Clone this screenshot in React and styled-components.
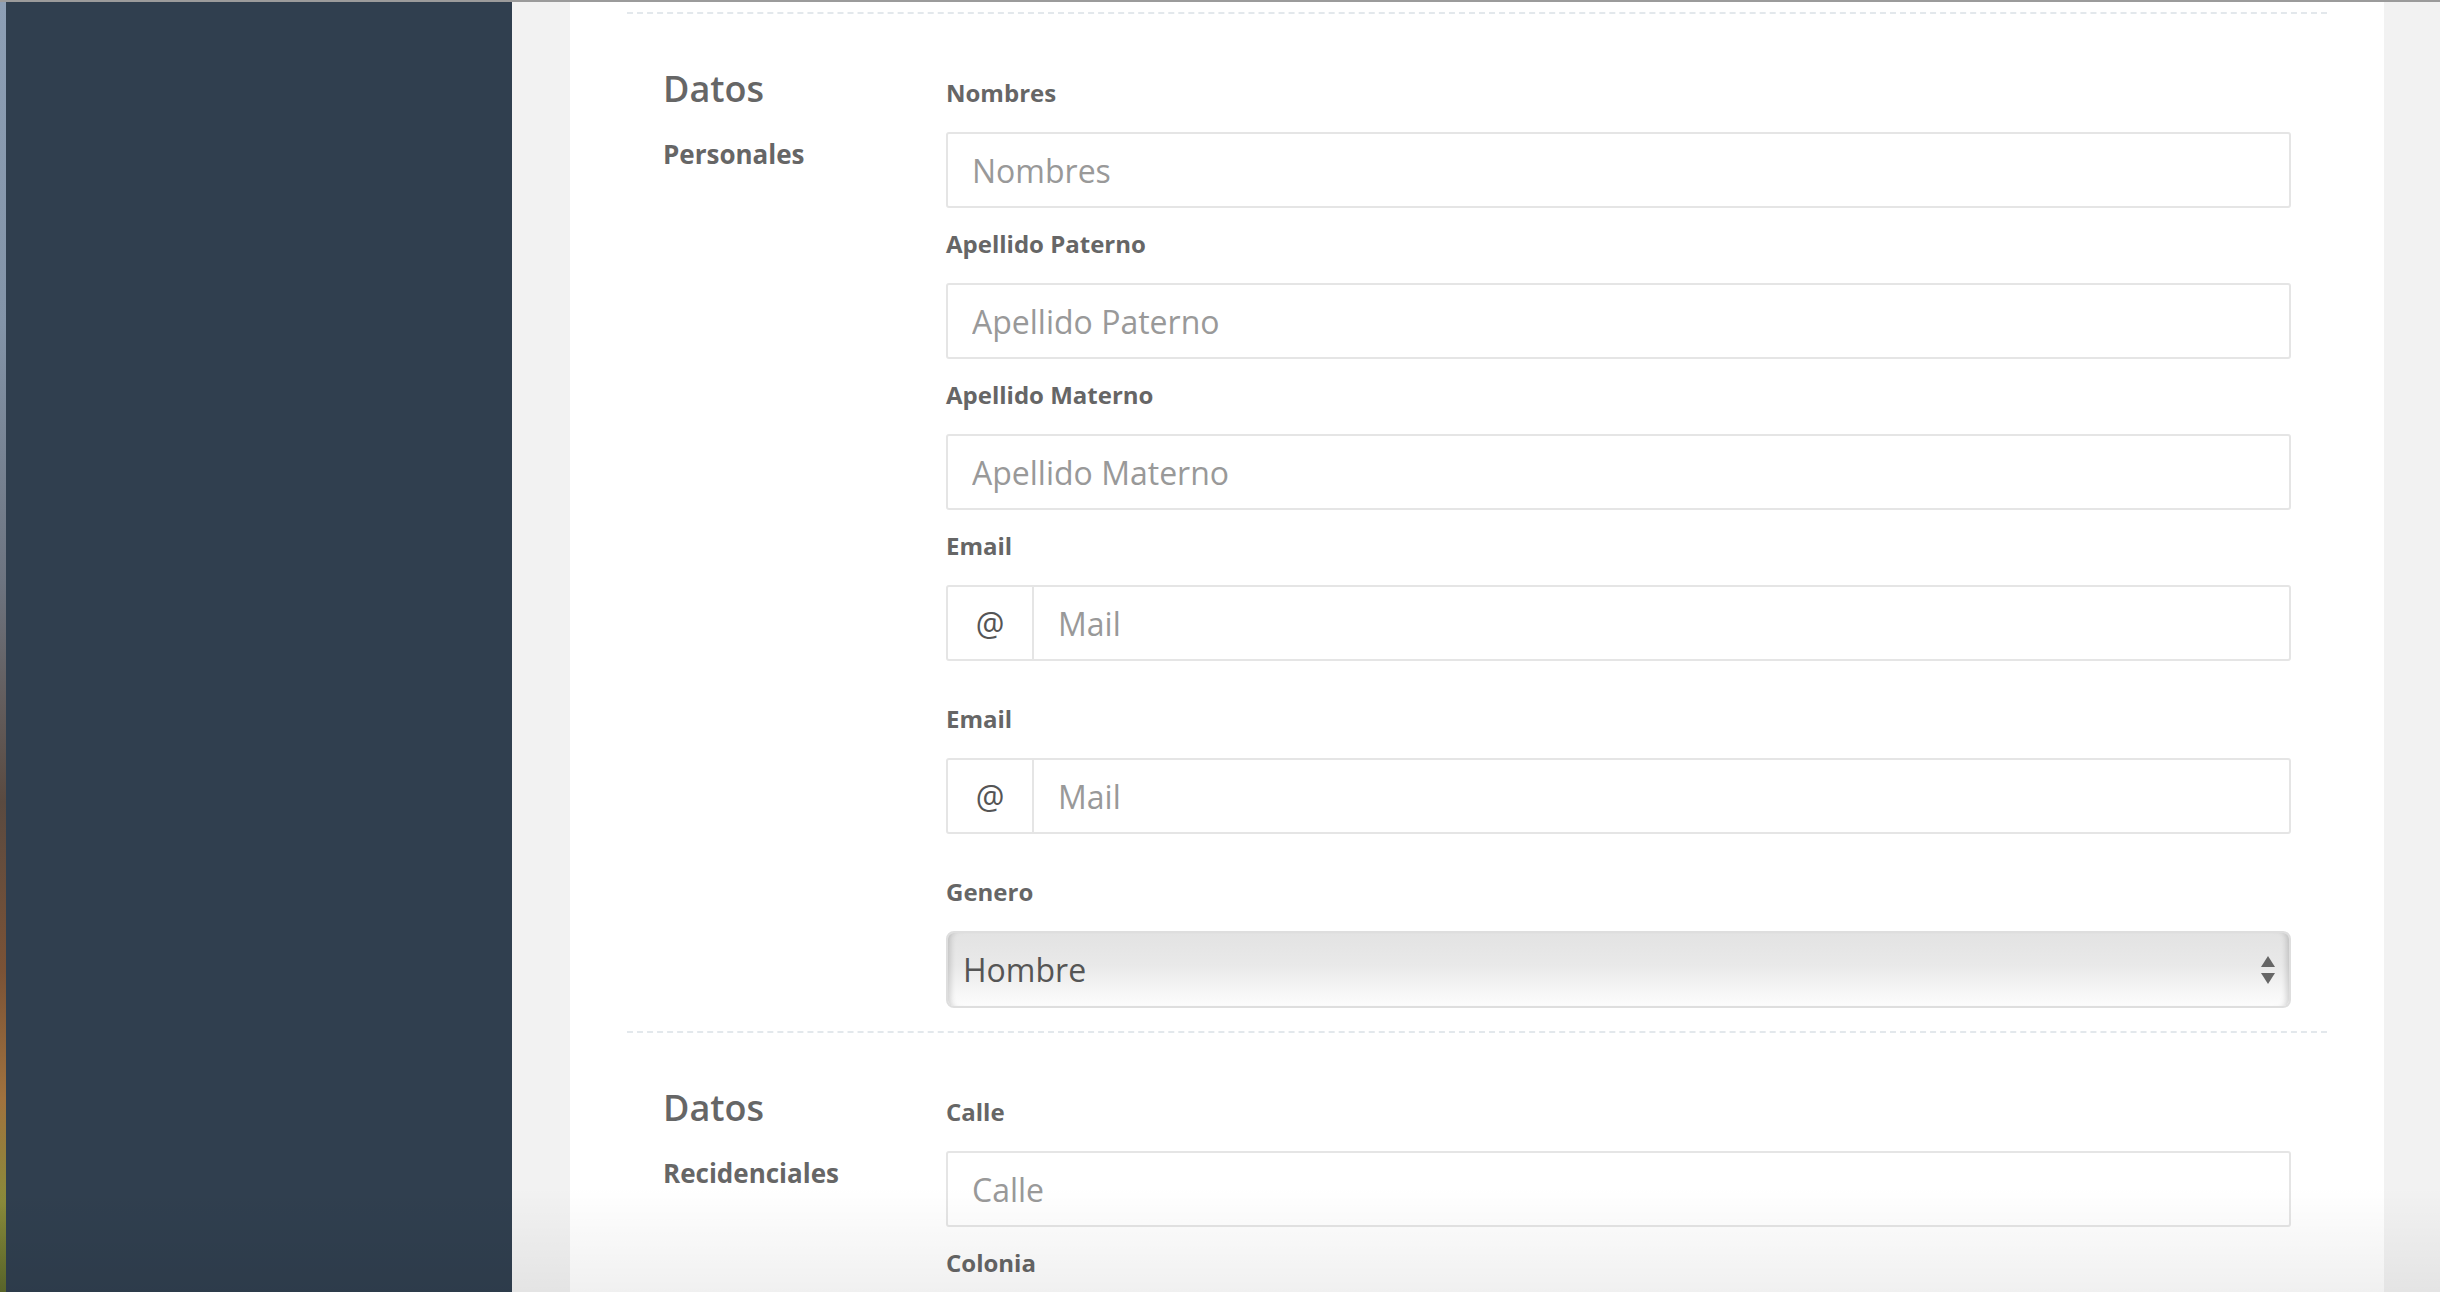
import React from "react";
import styled, { createGlobalStyle } from "styled-components";

const GlobalStyle = createGlobalStyle`
  html, body { margin: 0; padding: 0; height: 100%; overflow: hidden; }
  body { font-family: "Open Sans", "Noto Sans", sans-serif; background: #f2f2f2; }
  *, *::before, *::after { box-sizing: border-box; }
`;

const Screen = styled.div`
  position: relative;
  display: flex;
  flex-direction: column;
  width: 2440px;
  height: 1292px;
  overflow: hidden;
`;

const TopEdge = styled.div`
  flex: none;
  height: 2px;
  background: #9b9b9b;
`;

const Body = styled.div`
  flex: 1;
  display: flex;
  min-height: 0;
`;

const Wallpaper = styled.div`
  flex: none;
  width: 6px;
  background: linear-gradient(
    to bottom,
    #8d9fb5 0%,
    #8394a8 25%,
    #6d7480 45%,
    #5a4a40 62%,
    #7a5236 75%,
    #a0723e 85%,
    #8a8a3a 93%,
    #5d6a2c 100%
  );
`;

const Sidebar = styled.aside`
  flex: none;
  width: 506px;
  background: #303f4f;
`;

const Main = styled.main`
  flex: 1;
  min-width: 0;
  padding: 0 56px 0 58px;
  background: #f2f2f2;
`;

const Panel = styled.div`
  height: 100%;
  background: #fff;
  padding: 10px 57px 0;
`;

const Section = styled.section`
  display: grid;
  grid-template-columns: 283px 1fr;
  border-top: 2px dashed #e3e8ec;
  padding: 62px 36px 23px;
`;

const Side = styled.div`
  display: flex;
  flex-direction: column;
`;

const Title = styled.h2`
  margin: 0;
  font-size: 36px;
  font-weight: 600;
  line-height: 26px;
  color: #666;
`;

const Subtitle = styled.h3`
  margin: 35px 0 0;
  font-size: 26px;
  font-weight: 700;
  line-height: 34px;
  color: #666;
`;

const Fields = styled.div`
  display: flex;
  flex-direction: column;
  gap: 19px;
`;

const Field = styled.div`
  display: flex;
  flex-direction: column;
`;

const Label = styled.label`
  font-size: 24px;
  font-weight: 700;
  line-height: 34px;
  color: #666;
  margin-bottom: 22px;
`;

const TextInput = styled.input`
  height: 76px;
  width: 100%;
  border: 2px solid #e5e5e5;
  border-radius: 3px;
  padding: 0 24px;
  font-family: inherit;
  font-size: 32px;
  color: #555;
  background: #fff;
  outline: none;
  &::placeholder { color: #999; }
`;

const InputGroup = styled.div`
  display: flex;
  height: 76px;
  border: 2px solid #e5e5e5;
  border-radius: 3px;
  margin-bottom: 22px;
`;

const Addon = styled.span`
  flex: none;
  width: 86px;
  display: flex;
  align-items: center;
  justify-content: center;
  border-right: 2px solid #e5e5e5;
  font-size: 32px;
  color: #555;
`;

const GroupInput = styled.input`
  flex: 1;
  min-width: 0;
  border: none;
  padding: 0 24px;
  font-family: inherit;
  font-size: 32px;
  color: #555;
  background: transparent;
  outline: none;
  &::placeholder { color: #999; }
`;

const SelectWrap = styled.div`
  position: relative;
`;

const Select = styled.select`
  appearance: none;
  -webkit-appearance: none;
  width: 100%;
  height: 77px;
  border: 2px solid #dedede;
  border-radius: 8px;
  padding: 0 60px 0 15px;
  font-family: inherit;
  font-size: 32px;
  color: #555;
  background: linear-gradient(to bottom, #e3e3e3 0%, #e9e9e9 45%, #f6f6f6 80%, #fcfcfc 100%);
  box-shadow: inset 7px 0 6px -5px rgba(0, 0, 0, 0.18), inset -7px 0 6px -5px rgba(0, 0, 0, 0.18);
  outline: none;
`;

const Arrows = styled.svg`
  position: absolute;
  right: 16px;
  top: 50%;
  transform: translateY(-50%);
  width: 14px;
  height: 28px;
  pointer-events: none;
`;

const BottomShade = styled.div`
  position: absolute;
  left: 0;
  right: 0;
  bottom: 0;
  height: 105px;
  background: linear-gradient(to bottom, rgba(0, 0, 0, 0), rgba(0, 0, 0, 0.06));
  pointer-events: none;
`;

function TextField({ label, placeholder }) {
  return (
    <Field>
      <Label>{label}</Label>
      <TextInput placeholder={placeholder} aria-label={label} />
    </Field>
  );
}

function EmailField() {
  return (
    <Field>
      <Label>Email</Label>
      <InputGroup>
        <Addon>@</Addon>
        <GroupInput placeholder="Mail" />
      </InputGroup>
    </Field>
  );
}

export default function App() {
  return (
    <>
      <GlobalStyle />
      <Screen>
        <TopEdge />
        <Body>
          <Wallpaper />
          <Sidebar />
          <Main>
            <Panel>
              <Section>
                <Side>
                  <Title>Datos</Title>
                  <Subtitle>Personales</Subtitle>
                </Side>
                <Fields>
                  <TextField label="Nombres" placeholder="Nombres" />
                  <TextField label="Apellido Paterno" placeholder="Apellido Paterno" />
                  <TextField label="Apellido Materno" placeholder="Apellido Materno" />
                  <EmailField />
                  <EmailField />
                  <Field>
                    <Label>Genero</Label>
                    <SelectWrap>
                      <Select defaultValue="Hombre">
                        <option>Hombre</option>
                        <option>Mujer</option>
                      </Select>
                      <Arrows viewBox="0 0 14 28">
                        <path d="M7 0 L14 11 L0 11 Z" fill="#666" />
                        <path d="M0 17 L14 17 L7 28 Z" fill="#666" />
                      </Arrows>
                    </SelectWrap>
                  </Field>
                </Fields>
              </Section>
              <Section>
                <Side>
                  <Title>Datos</Title>
                  <Subtitle>Recidenciales</Subtitle>
                </Side>
                <Fields>
                  <TextField label="Calle" placeholder="Calle" />
                  <TextField label="Colonia" />
                </Fields>
              </Section>
            </Panel>
          </Main>
        </Body>
        <BottomShade />
      </Screen>
    </>
  );
}
